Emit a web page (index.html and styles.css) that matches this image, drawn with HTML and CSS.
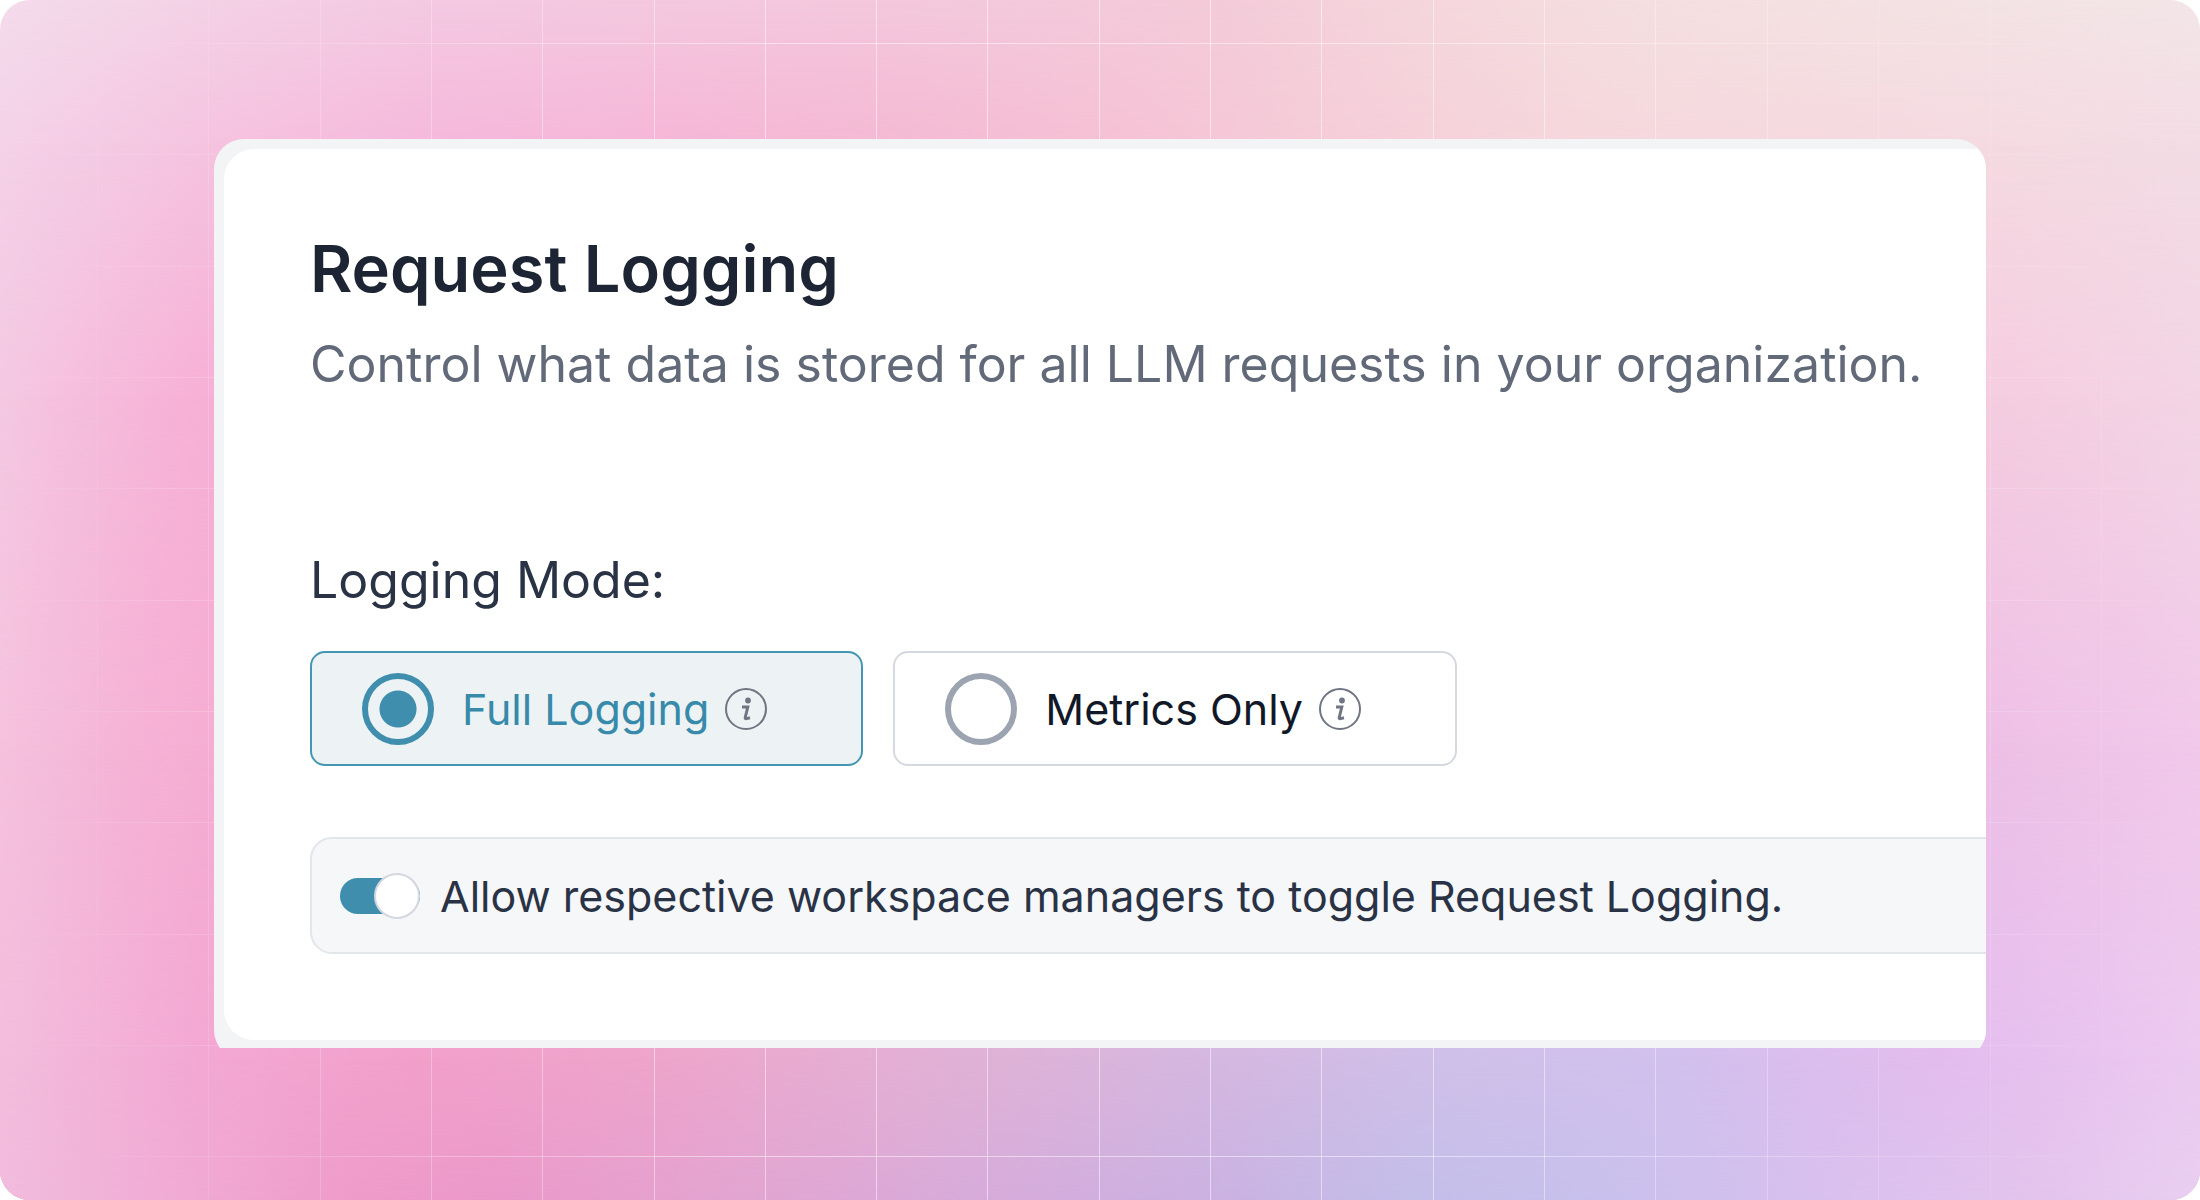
FILE: index.html
```html
<!DOCTYPE html>
<html lang="en">
<head>
<meta charset="utf-8">
<meta name="viewport" content="width=device-width, initial-scale=1">
<title>Request Logging</title>
<link rel="stylesheet" href="styles.css">
</head>
<body>
<svg class="symbols" aria-hidden="true">
  <symbol id="info" viewBox="0 0 42 42">
    <circle cx="21" cy="21" r="20" fill="none" stroke="currentColor" stroke-width="2"/>
    <circle cx="23" cy="12.500" r="2.900" fill="currentColor"/>
    <path d="M17 19H22.800L20.200 29.500Q20 31 21.600 30.600L25 29.800" fill="none" stroke="currentColor" stroke-width="3"/>
  </symbol>
</svg>
<div class="stage">
  <div class="wash wash-top"></div>
  <div class="wash wash-upper"></div>
  <div class="wash wash-middle"></div>
  <div class="wash wash-lower"></div>
  <div class="wash wash-bottom"></div>
  <svg class="lines" viewBox="0 0 2200 1200" preserveAspectRatio="xMidYMid slice" aria-hidden="true">
    <path d="M97.500 0V1200M208.500 0V1200M320.500 0V1200M431.500 0V1200M542.500 0V1200M654.500 0V1200M765.500 0V1200M876.500 0V1200M987.500 0V1200M1099.500 0V1200M1210.500 0V1200M1321.500 0V1200M1433.500 0V1200M1544.500 0V1200M1655.500 0V1200M1767.500 0V1200M1878.500 0V1200M1990.500 0V1200M2101.500 0V1200M0 43.500H2200M0 154.500H2200M0 266.500H2200M0 377.500H2200M0 488.500H2200M0 600.500H2200M0 711.500H2200M0 822.500H2200M0 934.500H2200M0 1045.500H2200M0 1156.500H2200"/>
  </svg>
  <main class="frame">
    <section class="panel">
      <h1 class="title">Request Logging</h1>
      <p class="lead">Control what data is stored for all LLM requests in your organization.</p>
      <fieldset class="modes">
        <legend class="legend">Logging Mode:</legend>
        <div class="options">
          <label class="option">
            <input class="radio" type="radio" name="mode" value="full" checked>
            <span class="option-text">Full Logging<svg class="info" role="img" aria-label="More information"><use href="#info"/></svg></span>
          </label>
          <label class="option">
            <input class="radio" type="radio" name="mode" value="metrics">
            <span class="option-text">Metrics Only<svg class="info" role="img" aria-label="More information"><use href="#info"/></svg></span>
          </label>
        </div>
      </fieldset>
      <label class="allow">
        <input class="switch" type="checkbox" role="switch" checked>
        <span>Allow respective workspace managers to toggle Request Logging.</span>
      </label>
    </section>
  </main>
</div>
</body>
</html>
```
FILE: styles.css
```css
* { box-sizing: border-box; }

body {
  margin: 0;
  background: #fff;
  font-family: Inter, "Liberation Sans", sans-serif;
  font-weight: 420;
}

.symbols { position: absolute; width: 0; height: 0; }

.stage {
  position: relative;
  min-height: 100vh;
  padding: 139px 214px 152px;
  border-radius: 30px;
  overflow: hidden;
  background: linear-gradient(90deg, #f4dcec 0%, #f4d1e6 10%, #f4c9e2 20%, #f4c8dd 40%, #f4cbd9 55%, #f5d7dd 65%, #f5dfe0 75%, #f3e6e8 100%);
}

/* Bands of colour that fade into each other from top to bottom */
.wash { position: absolute; inset: 0; }
.wash-top {
  background: linear-gradient(90deg, #f4d2e8 0%, #f5c2df 10%, #f5b8db 20%, #f6b6d7 30%, #f4b9d3 40%, #f5c0d4 50%, #f5ccd8 60%, #f5d7dc 72%, #f5dae1 90%, #f3dce4 100%);
  mask-image: linear-gradient(transparent 0%, #000 12%);
}
.wash-upper {
  background: linear-gradient(90deg, #f4c8e2 0%, #f6badb 5%, #f7aed5 10%, #f5b5d2 50%, #f5ccdf 90%, #f3d5e5 100%);
  mask-image: linear-gradient(transparent 12%, #000 33%);
}
.wash-middle {
  background: linear-gradient(90deg, #f5c2de 0%, #f5b5d7 5%, #f6acd2 10%, #f0b0d4 50%, #eebfe6 90%, #f1c9ea 100%);
  mask-image: linear-gradient(transparent 33%, #000 62%);
}
.wash-lower {
  background: linear-gradient(90deg, #f3bddd 0%, #f3a8d3 9%, #f2a0cb 19%, #eea5cb 30%, #e5afd3 40%, #d5b8e0 55%, #cfc0e9 66%, #d2c0ee 76%, #e3bcee 88%, #eccaf0 100%);
  mask-image: linear-gradient(transparent 62%, #000 88%);
}
.wash-bottom {
  background: linear-gradient(90deg, #f1bcdd 0%, #f0abd4 8%, #ee9bc9 16%, #ea99c9 23%, #e2a5d2 34%, #d5acdb 46%, #c9b2e2 56%, #c3bee9 64%, #c8c0ec 73%, #d8c0ee 83%, #e4c4ec 93%, #e9cef1 100%);
  mask-image: linear-gradient(transparent 88%, #000 100%);
}

.lines {
  position: absolute;
  inset: 0;
  width: 100%;
  height: 100%;
  fill: none;
  stroke: rgb(255 255 255 / 50%);
  mask-image: radial-gradient(ellipse 54% 130%, #000 45%, rgb(0 0 0 / 35%) 75%, transparent 96%);
}

.frame {
  position: relative;
  padding: 10px 0 8px 10px;
  background: #f2f4f6;
  clip-path: inset(0 0 -12px round 30px);
}

.panel {
  padding: 77px 0 86px 86px;
  border-radius: 30px 0 0 30px;
  background: #fff;
  overflow: hidden;
}

.title {
  margin: 0;
  font-size: 65px;
  line-height: 86px;
  font-weight: 600;
  color: #1d2433;
}

.lead {
  margin: 0 0 134px;
  font-size: 50px;
  line-height: 104px;
  white-space: nowrap;
  color: #626979;
}

.modes { margin: 0; padding: 0; border: 0; }

.legend {
  padding: 0;
  font-size: 50px;
  line-height: 60px;
  color: #2a3345;
}

.options { display: flex; gap: 30px; padding-top: 41px; }

.option {
  display: flex;
  align-items: center;
  gap: 28px;
  height: 115px;
  padding: 0 94px 0 50px;
  border: 2px solid #d5d9e0;
  border-radius: 15px;
  font-size: 43px;
  line-height: 52px;
  white-space: nowrap;
  color: #111828;
}
.option:has(:checked) {
  border-color: #4596b3;
  background: #edf3f5;
  color: #378aaa;
}

.radio {
  appearance: none;
  width: 72px;
  height: 72px;
  margin: 0;
  border: 6px solid #9ca3b1;
  border-radius: 50%;
}
.radio:checked {
  border-color: #3f8eae;
  background: radial-gradient(circle, #3f8eae 18px, transparent 19px);
}

.option-text { display: flex; align-items: center; gap: 16px; }

.info { width: 42px; height: 42px; color: #6f7582; }

.allow {
  display: flex;
  align-items: center;
  gap: 20px;
  width: 110%;
  height: 117px;
  margin-top: 71px;
  padding-left: 28px;
  border: 2px solid #e2e6ea;
  border-radius: 22px;
  background: #f5f7f9;
  font-size: 43px;
  line-height: 52px;
  white-space: nowrap;
  color: #2a3345;
}

.switch {
  appearance: none;
  display: flex;
  align-items: center;
  justify-content: flex-end;
  width: 80px;
  height: 36px;
  margin: 0;
  border-radius: 18px;
  background: #3f8eae;
}
.switch::before {
  content: "";
  flex: none;
  width: 42px;
  height: 42px;
  border: 2px solid #d3d8df;
  border-radius: 50%;
  background: #fff;
}
```
